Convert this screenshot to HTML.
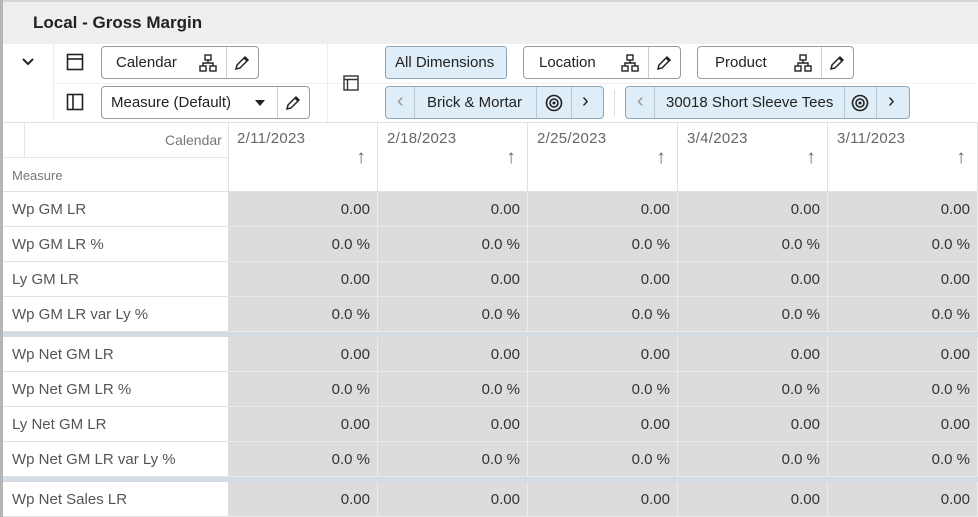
<!DOCTYPE html>
<html><head><meta charset="utf-8"><style>
*{box-sizing:border-box;margin:0;padding:0}
body{width:978px;height:517px;overflow:hidden;background:#fff;font-family:"Liberation Sans",sans-serif;position:relative;color:#333}
.a{position:absolute}
.btn{position:absolute;border:1px solid #9a9a9a;border-radius:4px;background:#fff;height:33px;font-size:15px;color:#222}
.blue{background:#deedf7;border-color:#8ea6b5}
.sep{position:absolute;top:0;bottom:0;width:1px;background:#ccc}
.t{position:absolute;top:7px;white-space:nowrap}
.rh{position:absolute;left:3px;width:225px;height:35px;border-bottom:1px solid #e2e2e2;font-size:15px;color:#555;padding:9px 0 0 9px;background:#fff}
.dc{position:absolute;width:150px;height:35px;background:#dcdcdc;border-right:1px solid #ececec;border-bottom:1px solid #e8e8e8;font-size:15px;color:#333;text-align:right;padding:9px 7px 0 0}
.ch{position:absolute;top:122px;width:150px;height:70px;border-right:1px solid #e0e0e0;font-size:15px;color:#666;padding:8px 0 0 9px;letter-spacing:0.3px}
.ch span{position:absolute;right:11px;top:25px;font-size:19px;color:#666}
.gs{position:absolute;left:3px;width:975px;height:5px;background:#d4dbe2}
.lt{font-size:20px;top:3px!important;color:#999}
.rt{font-size:20px;top:3px!important;color:#222}
</style></head><body>
<div class="a" style="left:0;top:0;width:3px;height:517px;background:#b5b5b5"></div>
<div class="a" style="left:3px;top:0;width:975px;height:44px;background:#efefef;border-top:2px solid #d6d6d6"></div>
<div class="a" style="left:33px;top:13px;font-size:17px;font-weight:bold;color:#222">Local - Gross Margin</div>
<div class="a" style="left:53px;top:44px;width:1px;height:78px;background:#ececec"></div>
<div class="a" style="left:54px;top:83px;width:920px;height:1px;background:#f0f0f0"></div>
<div class="a" style="left:327px;top:44px;width:1px;height:78px;background:#ececec"></div>
<svg class="a" style="left:20px;top:56px" width="16" height="12"><path d="M3 3l5 5 5-5" stroke="#222" stroke-width="2" fill="none"/></svg>
<svg class="a" style="left:66px;top:53px" width="18" height="18"><rect x="1.5" y="1.5" width="15" height="15" fill="none" stroke="#222" stroke-width="1.6"/><line x1="1.5" y1="6" x2="16.5" y2="6" stroke="#222" stroke-width="1.6"/></svg>
<svg class="a" style="left:66px;top:93px" width="18" height="18"><rect x="1.5" y="1.5" width="15" height="15" fill="none" stroke="#222" stroke-width="1.6"/><line x1="7" y1="1.5" x2="7" y2="16.5" stroke="#222" stroke-width="1.6"/></svg>
<svg class="a" style="left:343px;top:75px" width="16" height="16"><rect x="1" y="1" width="14" height="14" fill="none" stroke="#333" stroke-width="1.4"/><path d="M1 4.5H15M4.5 4.5V15" stroke="#333" stroke-width="1.4"/></svg>

<div class="btn" style="left:101px;top:46px;width:158px"><span class="t" style="left:14px">Calendar</span><div class="sep" style="left:124px"></div>
<svg class="a" style="left:97px;top:7px" width="18" height="18"><g fill="none" stroke="#222" stroke-width="1.4"><rect x="6" y="1" width="6" height="5"/><rect x="1" y="12" width="6" height="5"/><rect x="11" y="12" width="6" height="5"/><path d="M9 6v3M4 12V9h10v3"/></g></svg>
<svg class="a" style="left:131px;top:7px" width="18" height="18"><path d="M3 15l1-4L12 3l3 3-8 8z M11 4l3 3" fill="none" stroke="#222" stroke-width="1.5"/></svg></div>

<div class="btn" style="left:101px;top:86px;width:209px"><span class="t" style="left:9px">Measure (Default)</span><div class="sep" style="left:175px"></div>
<svg class="a" style="left:152px;top:12px" width="12" height="8"><path d="M1 1h10L6 7z" fill="#222"/></svg>
<svg class="a" style="left:182px;top:7px" width="18" height="18"><path d="M3 15l1-4L12 3l3 3-8 8z M11 4l3 3" fill="none" stroke="#222" stroke-width="1.5"/></svg></div>

<div class="btn blue" style="left:385px;top:46px;width:122px;border-radius:3px"><span class="t" style="left:9px">All Dimensions</span></div>

<div class="btn" style="left:523px;top:46px;width:158px"><span class="t" style="left:15px">Location</span><div class="sep" style="left:124px"></div>
<svg class="a" style="left:97px;top:7px" width="18" height="18"><g fill="none" stroke="#222" stroke-width="1.4"><rect x="6" y="1" width="6" height="5"/><rect x="1" y="12" width="6" height="5"/><rect x="11" y="12" width="6" height="5"/><path d="M9 6v3M4 12V9h10v3"/></g></svg>
<svg class="a" style="left:131px;top:7px" width="18" height="18"><path d="M3 15l1-4L12 3l3 3-8 8z M11 4l3 3" fill="none" stroke="#222" stroke-width="1.5"/></svg></div>

<div class="btn" style="left:697px;top:46px;width:157px"><span class="t" style="left:17px">Product</span><div class="sep" style="left:123px"></div>
<svg class="a" style="left:96px;top:7px" width="18" height="18"><g fill="none" stroke="#222" stroke-width="1.4"><rect x="6" y="1" width="6" height="5"/><rect x="1" y="12" width="6" height="5"/><rect x="11" y="12" width="6" height="5"/><path d="M9 6v3M4 12V9h10v3"/></g></svg>
<svg class="a" style="left:130px;top:7px" width="18" height="18"><path d="M3 15l1-4L12 3l3 3-8 8z M11 4l3 3" fill="none" stroke="#222" stroke-width="1.5"/></svg></div>

<div class="btn blue" style="left:385px;top:86px;width:219px"><span class="t lt" style="left:11px">‹</span><div class="sep" style="left:28px;background:#b8c8d3"></div><span class="t" style="left:41px">Brick &amp; Mortar</span><div class="sep" style="left:150px;background:#b8c8d3"></div>
<svg class="a" style="left:159px;top:7px" width="18" height="18"><circle cx="9" cy="9" r="7.5" fill="none" stroke="#222" stroke-width="1.6"/><circle cx="9" cy="9" r="4" fill="none" stroke="#222" stroke-width="1.6"/><circle cx="9" cy="9" r="1.5" fill="#222"/></svg>
<div class="sep" style="left:185px;background:#b8c8d3"></div><span class="t rt" style="left:196px">›</span></div>

<div class="a" style="left:614px;top:90px;width:1px;height:26px;background:#ddd"></div>
<div class="btn blue" style="left:625px;top:86px;width:285px"><span class="t lt" style="left:11px">‹</span><div class="sep" style="left:28px;background:#b8c8d3"></div><span class="t" style="left:40px">30018 Short Sleeve Tees</span><div class="sep" style="left:218px;background:#b8c8d3"></div>
<svg class="a" style="left:225px;top:7px" width="18" height="18"><circle cx="9" cy="9" r="7.5" fill="none" stroke="#222" stroke-width="1.6"/><circle cx="9" cy="9" r="4" fill="none" stroke="#222" stroke-width="1.6"/><circle cx="9" cy="9" r="1.5" fill="#222"/></svg>
<div class="sep" style="left:250px;background:#b8c8d3"></div><span class="t rt" style="left:262px">›</span></div>

<div class="a" style="left:3px;top:122px;width:975px;height:1px;background:#e0e0e0"></div>
<div class="a" style="left:24px;top:123px;width:1px;height:34px;background:#e6e6e6"></div>
<div class="a" style="left:3px;top:157px;width:225px;height:1px;background:#e6e6e6"></div>
<div class="a" style="left:165px;top:132px;font-size:14px;color:#777">Calendar</div>
<div class="a" style="left:12px;top:168px;font-size:13px;color:#777">Measure</div>
<div class="a" style="left:228px;top:122px;width:1px;height:70px;background:#e0e0e0"></div>
<div class="ch" style="left:228px">2/11/2023<span>↑</span></div>
<div class="ch" style="left:378px">2/18/2023<span>↑</span></div>
<div class="ch" style="left:528px">2/25/2023<span>↑</span></div>
<div class="ch" style="left:678px">3/4/2023<span>↑</span></div>
<div class="ch" style="left:828px">3/11/2023<span>↑</span></div>
<div class="a" style="left:3px;top:191px;width:975px;height:1px;background:#e0e0e0"></div>

<div id="rows"></div>
<script>
var rows=[["Wp GM LR",192,0],["Wp GM LR %",227,1],["Ly GM LR",262,0],["Wp GM LR var Ly %",297,1],
["Wp Net GM LR",337,0],["Wp Net GM LR %",372,1],["Ly Net GM LR",407,0],["Wp Net GM LR var Ly %",442,1],["Wp Net Sales LR",482,0]];
var h="";
rows.forEach(function(r){h+='<div class="rh" style="top:'+r[1]+'px">'+r[0]+'</div>';
for(var i=0;i<5;i++)h+='<div class="dc" style="top:'+r[1]+'px;left:'+(228+i*150)+'px">'+(r[2]?'0.0 %':'0.00')+'</div>';});
h+='<div class="gs" style="top:332px"></div><div class="gs" style="top:477px"></div>';
document.getElementById("rows").innerHTML=h;
</script>
</body></html>
